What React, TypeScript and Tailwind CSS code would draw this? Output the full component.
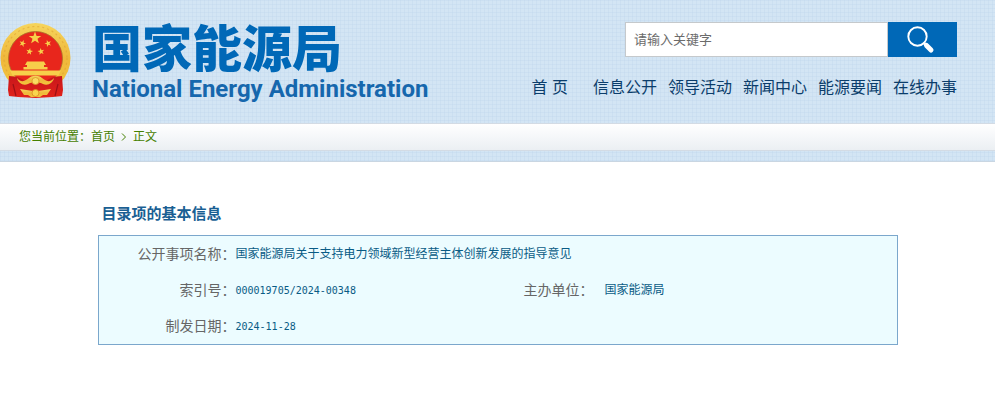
import React from 'react';

interface InfoCell {
  label: string;
  value: string;
}

const navItems: string[] = ['信息公开', '领导活动', '新闻中心', '能源要闻', '在线办事'];

const rows: InfoCell[][] = [
  [{ label: '公开事项名称：', value: '国家能源局关于支持电力领域新型经营主体创新发展的指导意见' }],
  [
    { label: '索引号：', value: '000019705/2024-00348' },
    { label: '主办单位：', value: '国家能源局' },
  ],
  [{ label: '制发日期：', value: '2024-11-28' }],
];

const STAR = 'M0-10 2.4-3.2 9.5-3.1 3.8 1.2 5.9 8.1 0 4 -5.9 8.1 -3.8 1.2 -9.5-3.1 -2.4-3.2Z';

const Emblem: React.FC = () => (
  <svg viewBox="0 0 71 78" className="w-[71px] h-[78px] shrink-0" aria-hidden="true">
    <defs>
      <linearGradient id="gold" x1="0" y1="0" x2="0" y2="1">
        <stop offset="0" stopColor="#f6d55c" />
        <stop offset="0.5" stopColor="#efb83c" />
        <stop offset="1" stopColor="#f3c63a" />
      </linearGradient>
      <linearGradient id="cloth" x1="0" y1="0" x2="0" y2="1">
        <stop offset="0" stopColor="#c8161b" />
        <stop offset="1" stopColor="#e2231a" />
      </linearGradient>
    </defs>
    <circle cx="35.5" cy="36" r="35" fill="url(#gold)" />
    <circle cx="35.5" cy="36" r="31.5" fill="none" stroke="#dc9a2c" strokeWidth="1.2" strokeDasharray="2 3" opacity="0.5" />
    <circle cx="35.5" cy="36.5" r="27" fill="#e8261c" stroke="#a8702a" strokeWidth="0.8" />
    <g fill="#f7cf4a">
      <path d={STAR} transform="translate(35 16) scale(.66)" />
      <path d={STAR} transform="translate(22.5 21.5) rotate(20) scale(.36)" />
      <path d={STAR} transform="translate(48 21.5) rotate(-20) scale(.36)" />
      <path d={STAR} transform="translate(29.5 29.5) rotate(10) scale(.36)" />
      <path d={STAR} transform="translate(41 29.5) rotate(-10) scale(.36)" />
      <path d="M27 39.5h17l2 3.5h-2v2h3.5v2.5h-24V45H27v-2h-2Z" />
      <path d="M10 48.5h51l-2.5 5H12.5Z" />
    </g>
    <path d="M9 54c7 0 13 2 18 6l8.5 2 8.5-2c5-4 11-6 18-6l1 14-1 6-9 1-17.5 1-17.5-1-9-1-1-6Z" fill="url(#cloth)" />
    <path d="M13 62l3 12M58 62l-3 12" stroke="#9c1016" strokeWidth="1.2" fill="none" />
    <path d="M17 56c5 6 9 2 12 0 3-3 10-3 13 0 3 2 7 6 12 0-1 5-6 8-11 6-2-1-4-2-7.5-2s-5.5 1-7.5 2c-5 2-10-1-11-6Z" fill="url(#gold)" />
    <circle cx="35.5" cy="59" r="3.5" fill="#f9dc62" stroke="#dc9428" strokeWidth="0.8" />
    <path d="M20 67 33 69h5l13-2-4 6-4 0-3 2h-9l-3-2-4 0Z" fill="url(#gold)" />
    <circle cx="35.5" cy="71" r="3.5" fill="#f9d64e" stroke="#d98a22" strokeWidth="0.8" />
  </svg>
);

const SearchIcon: React.FC = () => (
  <svg viewBox="0 0 28 28" className="w-7 h-7" aria-hidden="true">
    <circle cx="10.5" cy="10.5" r="9.2" fill="none" stroke="#fff" strokeWidth="1.9" />
    <path d="M16.5 16.5l3 3" stroke="#fff" strokeWidth="2.5" />
    <path d="M19.5 19.5l4.5 4.5" stroke="#fff" strokeWidth="5" strokeLinecap="round" />
  </svg>
);

const App: React.FC = () => {
  return (
    <div lang="zh-CN" className="min-h-screen bg-white font-['Liberation_Sans','Noto_Sans_CJK_SC',sans-serif]">
      <div className="bg-[#d3e5f4] bg-[repeating-linear-gradient(0deg,#bfd6ec59_0_1px,transparent_1px_4px),repeating-linear-gradient(90deg,#bfd6ec59_0_1px,transparent_1px_4px)] border-b border-[#c9d6e2] pb-2.5">
        <header className="flex justify-between items-start pt-[22px] pr-[38px] h-[123px]">
          <a href="#" className="flex gap-[21px]">
            <Emblem />
            <span className="flex flex-col pt-[3px] text-[#0068b7] font-bold whitespace-nowrap">
              <span className="text-[50px] leading-[50px] font-black">国家能源局</span>
              <span className="font-['Roboto',sans-serif] text-[24px] leading-[28px] text-[#1667ad]">National Energy Administration</span>
            </span>
          </a>
          <div className="flex flex-col items-end gap-[19px]">
            <form role="search" className="flex h-[35px]">
              <input
                type="text"
                aria-label="请输入关键字"
                placeholder="请输入关键字"
                className="w-[263px] px-2 text-[13px] bg-white border border-[#c5c9cc] placeholder:text-[#6b6b6b] outline-none"
              />
              <button type="button" aria-label="搜索" className="w-[69px] pr-1 flex items-center justify-center bg-[#0068b7]">
                <SearchIcon />
              </button>
            </form>
            <nav className="flex gap-[11px] text-base leading-6 text-[#0b3d6b] whitespace-nowrap">
              <a href="#" className="mr-3.5">首 页</a>
              {navItems.map((item) => (
                <a key={item} href="#">{item}</a>
              ))}
            </nav>
          </div>
        </header>
        <div className="flex items-center h-7 pl-[19px] text-xs text-[#458000] bg-linear-to-b from-white to-[#ebeff3] border-y border-[#d3dbe4]">
          <span>您当前位置：</span>
          <a href="#">首页</a>
          <svg viewBox="0 0 6 8" className="w-1.5 h-2 mx-1.5" aria-hidden="true">
            <path d="M1 0.5 4.5 4 1 7.5" fill="none" stroke="#458000" />
          </svg>
          <span>正文</span>
        </div>
      </div>

      <main className="max-w-[800px] mx-auto pt-10">
        <h1 className="pl-1 text-[15px] leading-6 font-bold text-[#1a5f93]">目录项的基本信息</h1>
        <div className="mt-[9px] border border-[#7ba7cc] bg-[#ecfcff]">
          <table className="w-full table-fixed text-left">
            <colgroup>
              <col className="w-[137px]" />
              <col className="w-[288px]" />
              <col className="w-[81px]" />
              <col />
            </colgroup>
            <tbody>
              {rows.map((cells) => (
                <tr key={cells[0].label} className="h-9">
                  {cells.map((cell, i) => (
                    <React.Fragment key={cell.label}>
                      <th
                        scope="row"
                        className={`p-0 text-sm font-normal text-[#666] whitespace-nowrap ${i === 0 ? 'text-right' : 'text-left'}`}
                      >
                        {cell.label}
                      </th>
                      <td
                        colSpan={cells.length === 1 ? 3 : 1}
                        className={`p-0 text-[#095b85] ${/^[\d/-]+$/.test(cell.value) ? "text-[10px] font-['DejaVu_Sans_Mono',monospace]" : 'text-xs'}`}
                      >
                        {cell.value}
                      </td>
                    </React.Fragment>
                  ))}
                </tr>
              ))}
            </tbody>
          </table>
        </div>
      </main>
    </div>
  );
};

export default App;
